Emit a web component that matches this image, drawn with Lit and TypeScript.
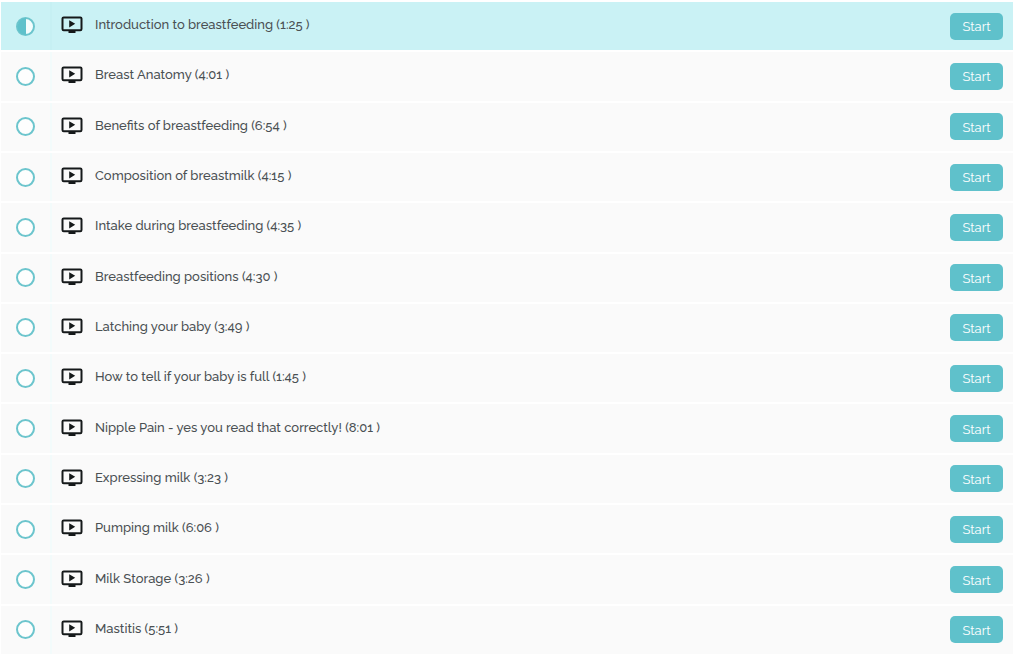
import { LitElement, html, css, svg } from "lit";
import { customElement, property } from "lit/decorators.js";

interface Lecture {
  title: string;
  length: string;
  current?: boolean;
}

const LECTURES: Lecture[] = [
  { title: "Introduction to breastfeeding", length: "1:25", current: true },
  { title: "Breast Anatomy", length: "4:01" },
  { title: "Benefits of breastfeeding", length: "6:54" },
  { title: "Composition of breastmilk", length: "4:15" },
  { title: "Intake during breastfeeding", length: "4:35" },
  { title: "Breastfeeding positions", length: "4:30" },
  { title: "Latching your baby", length: "3:49" },
  { title: "How to tell if your baby is full", length: "1:45" },
  { title: "Nipple Pain - yes you read that correctly!", length: "8:01" },
  { title: "Expressing milk", length: "3:23" },
  { title: "Pumping milk", length: "6:06" },
  { title: "Milk Storage", length: "3:26" },
  { title: "Mastitis", length: "5:51" },
];

@customElement("lecture-row")
export class LectureRow extends LitElement {
  @property({ attribute: false }) lecture!: Lecture;

  static styles = css`
    :host {
      display: flex;
    }
    .row {
      flex: 1;
      display: grid;
      grid-template-columns: 51px 1fr auto;
      background: #fafafa;
    }
    .row.current {
      background: #caf2f5;
    }
    .status {
      display: flex;
      align-items: center;
      justify-content: center;
      border-right: 2px solid #f3fbfb;
    }
    .current .status {
      border-right-color: #c6f0f3;
    }
    .status svg,
    .link svg {
      display: block;
      flex: none;
    }
    .link {
      display: flex;
      align-items: center;
      gap: 12px;
      min-width: 0;
      padding: 0 12px 2px 9px;
      color: #4a5053;
      text-decoration: none;
      font-size: 13px;
      font-weight: 500;
      line-height: 20px;
    }
    .action {
      display: flex;
      align-items: center;
      padding-right: 10px;
    }
    .start {
      width: 53px;
      height: 27px;
      padding: 1px 0 0;
      border: 0;
      border-radius: 5px;
      background: #5fc1cb;
      color: #fff;
      font: inherit;
      font-size: 13px;
      cursor: pointer;
    }
  `;

  render() {
    const { title, length, current } = this.lecture;
    return html`
      <div class="row ${current ? "current" : ""}">
        <div class="status">
          <svg width="19" height="19" viewBox="0 0 19 19" aria-hidden="true">
            <circle cx="9.5" cy="9.5" r="8.5" fill=${current ? "#f4fdfd" : "#fdfefe"} stroke="#6cc5cd" stroke-width="2" />
            ${current ? svg`<path d="M10 1a8.5 8.5 0 0 0 0 17z" fill="#5fc1cb" />` : null}
          </svg>
        </div>
        <a class="link" href="#">
          <svg width="22" height="20" viewBox="0 0 22 20" aria-hidden="true">
            <rect x="1.5" y="2.4" width="19" height="12.8" rx="1.2" fill="none" stroke="#15191a" stroke-width="2" />
            <path d="M7.5 15h7v3h-7zM8.2 5.2v7.2l6-3.6z" fill="#15191a" />
          </svg>
          <span>${title} (${length} )</span>
        </a>
        <div class="action">
          <button class="start" type="button" aria-label="Start ${title}">Start</button>
        </div>
      </div>
    `;
  }
}

@customElement("app-root")
export class AppRoot extends LitElement {
  static styles = css`
    :host {
      display: block;
      background: #fff;
      font-family: Raleway, Lato, "Open Sans", sans-serif;
    }
    .list {
      box-sizing: border-box;
      min-height: 100vh;
      display: grid;
      grid-auto-rows: minmax(48px, 1fr);
      gap: 2px;
      margin: 0;
      padding: 2px 11px 1px 1px;
      list-style: none;
    }
    .item {
      display: grid;
    }
  `;

  render() {
    return html`
      <ul class="list">
        ${LECTURES.map(
          (lecture) => html`<li class="item"><lecture-row .lecture=${lecture}></lecture-row></li>`
        )}
      </ul>
    `;
  }
}
